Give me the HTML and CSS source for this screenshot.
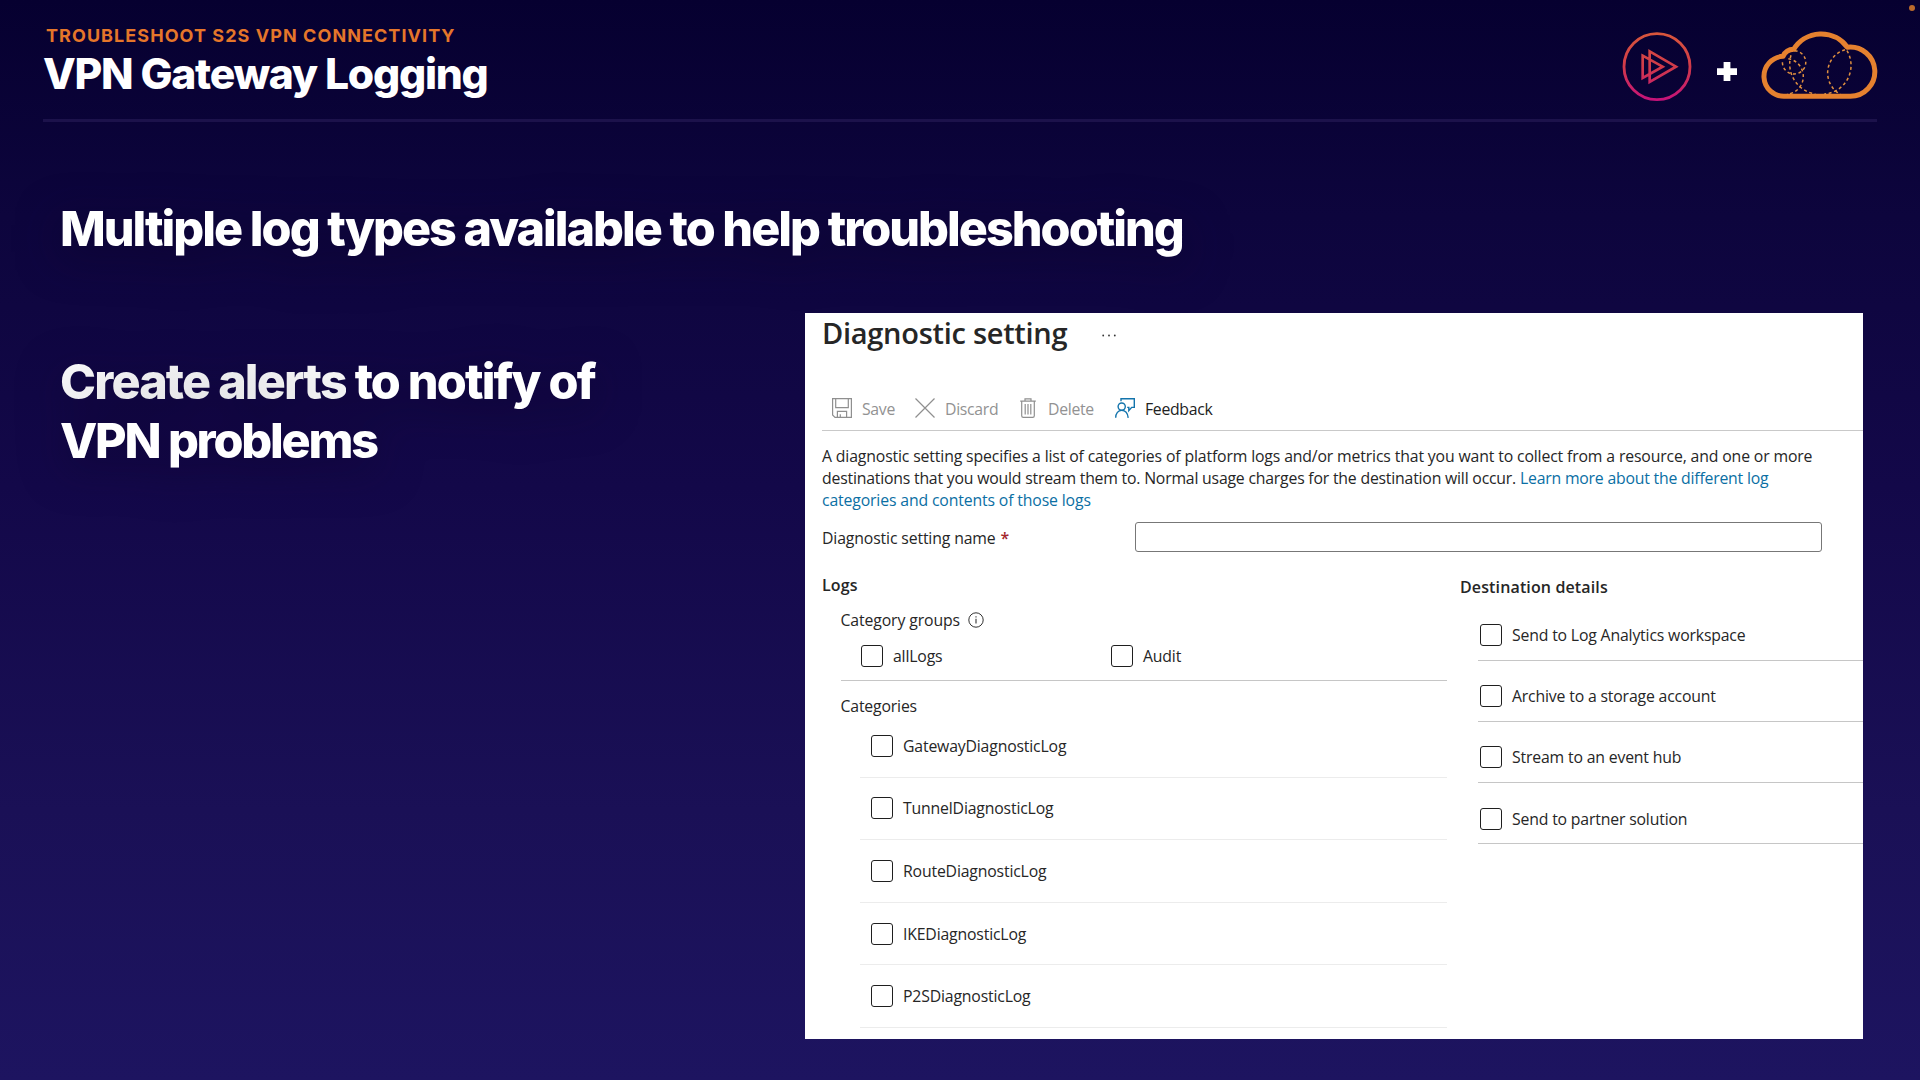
FILE: index.html
```html
<!DOCTYPE html>
<html lang="en">
<head>
<meta charset="utf-8">
<title>VPN Gateway Logging</title>
<link rel="stylesheet" href="styles.css">
</head>
<body>
<span class="rec-dot"></span>
<header class="header">
  <div class="titles">
    <p class="eyebrow">TROUBLESHOOT S2S VPN CONNECTIVITY</p>
    <h1 class="title">VPN Gateway Logging</h1>
  </div>
  <div class="logos">
    <svg class="play-logo" viewBox="68 96 210 210" fill="none">
      <defs>
        <linearGradient id="play" gradientUnits="userSpaceOnUse" x1="0" y1="96" x2="0" y2="304">
          <stop offset="0" stop-color="#d9573b"/><stop offset="0.5" stop-color="#d03a4a"/><stop offset="1" stop-color="#c5117b"/>
        </linearGradient>
      </defs>
      <g stroke="url(#play)">
        <circle cx="173" cy="200" r="99" stroke-width="8.500"/>
        <path stroke-width="8" d="M151 154 230 200 151 246ZM130 167 190 200 130 234Z"/>
      </g>
    </svg>
    <svg class="plus" viewBox="0 0 20 20" fill="#fff"><path d="M6.6 0h6.8v6.2H20v6.9h-6.6V19H6.6v-5.9H0V6.2h6.6z"/></svg>
    <svg class="cloud" viewBox="482 90 352 210" fill="none" stroke="#e5812f">
      <path stroke-width="15" stroke-linejoin="round" d="M554 289H750A74 74 0 1 0 741 141.500A97 97 0 0 0 580 148A36 36 0 0 0 548 169A60 60 0 0 0 554 289Z"/>
      <g stroke-width="4.500" stroke-dasharray="9 8" stroke="#e0903f">
        <path d="M583 152A35 35 0 1 1 547 180"/>
        <path d="M564 176A54 54 0 0 1 560 283"/>
        <path d="M572 166A91 91 0 0 0 645 282"/>
        <path d="M734 149A73 73 0 0 0 720 283"/>
        <path d="M740 152A86 86 0 0 1 672 282"/>
      </g>
    </svg>
  </div>
</header>
<main class="slide">
  <h2 class="point">Multiple log types available to help troubleshooting</h2>
  <div class="split">
    <h2 class="point alerts"><span class="shine">Create alerts</span> to notify of<br><span class="tail">VPN problems</span></h2>
    <section class="panel">
      <div class="panel-head">
        <h3 class="panel-title">Diagnostic setting</h3>
        <svg class="dots" viewBox="0 0 14 3" fill="#333"><circle cx="1.200" cy="1.500" r=".9"/><circle cx="7" cy="1.500" r=".9"/><circle cx="12.800" cy="1.500" r=".9"/></svg>
      </div>
      <div class="toolbar">
        <div class="tool save">
          <svg class="icon" viewBox="0 0 20 20" fill="none" stroke="#8f8f8f" stroke-width="1.200"><path d="M.6.6H19.400V19.400H3L.6 17ZM3.700.6V9.600H16.300V.6M5.400 19.400V13.300H14.600V19.400M8.300 19.400V16.200"/></svg>
          <span>Save</span>
        </div>
        <div class="tool discard">
          <svg class="icon" viewBox="0 0 20 20" fill="none" stroke="#8f8f8f" stroke-width="1.200"><path d="M.5.5 19.500 19.500M19.500.5.5 19.500"/></svg>
          <span>Discard</span>
        </div>
        <div class="tool delete">
          <svg class="icon" viewBox="0 0 20 20" fill="none" stroke="#8f8f8f" stroke-width="1.200"><path d="M2.200 3.200H17.800M7 3.200V.8H13V3.200M3.700 3.200V17.800Q3.700 19.400 5.300 19.400H14.700Q16.300 19.400 16.300 17.800V3.200M7.200 6V16.500M10 6V16.500M12.800 6V16.500"/></svg>
          <span>Delete</span>
        </div>
        <div class="tool feedback">
          <svg class="icon" viewBox="0 0 20 20" fill="none" stroke="#1374ac" stroke-width="1.400"><circle cx="6.700" cy="8.600" r="3.600"/><path d="M.7 19.800C.7 15.300 3.200 12.400 6.700 12.400S12.700 15.300 13.200 19.800M6 3.300V.7H19.300V9.400H16.700L13.800 12.600V9.400H12.200"/></svg>
          <span>Feedback</span>
        </div>
      </div>
      <p class="intro">A diagnostic setting specifies a list of categories of platform logs and/or metrics that you want to collect from a resource, and one or more<br><span class="tight">destinations that you would stream them to. Normal usage charges for the destination will occur. <a class="link">Learn more about the different log</a></span><br><a class="link">categories and contents of those logs</a></p>
      <div class="name-row">
        <label class="name-label" for="name">Diagnostic setting name <b class="req">*</b></label>
        <input class="name-input" id="name" type="text">
      </div>
      <div class="columns">
        <div class="logs">
          <h4 class="section">Logs</h4>
          <div class="group-label">Category groups
            <svg class="info" viewBox="0 0 16 16" fill="none" stroke="#333"><circle cx="8" cy="8" r="7.200" stroke-width="1"/><path d="M8 6.700V11.600M8 4.300V5.500" stroke-width="1.100"/></svg>
          </div>
          <div class="groups">
            <label class="check"><i class="box"></i>allLogs</label>
            <label class="check"><i class="box"></i>Audit</label>
          </div>
          <div class="cat-label">Categories</div>
          <div class="cats">
            <label class="check cat"><i class="box"></i>GatewayDiagnosticLog</label>
            <label class="check cat"><i class="box"></i>TunnelDiagnosticLog</label>
            <label class="check cat"><i class="box"></i>RouteDiagnosticLog</label>
            <label class="check cat"><i class="box"></i>IKEDiagnosticLog</label>
            <label class="check cat"><i class="box"></i>P2SDiagnosticLog</label>
          </div>
        </div>
        <div class="dest">
          <h4 class="section">Destination details</h4>
          <div class="dest-list">
            <label class="check dst"><i class="box"></i>Send to Log Analytics workspace</label>
            <label class="check dst"><i class="box"></i>Archive to a storage account</label>
            <label class="check dst"><i class="box"></i>Stream to an event hub</label>
            <label class="check dst"><i class="box"></i>Send to partner solution</label>
          </div>
        </div>
      </div>
    </section>
  </div>
</main>
</body>
</html>
```
FILE: styles.css
```css
* { box-sizing: border-box; margin: 0; padding: 0; }

body {
  width: 1920px;
  height: 1080px;
  overflow: hidden;
  background: linear-gradient(#060030 0, #0d053d 20%, #130849 45%, #1a1056 75%, #1d1460 100%);
  font-family: Inter, sans-serif;
  color: #fff;
}

.rec-dot {
  position: absolute;
  top: 5px;
  right: 5px;
  width: 6px;
  height: 6px;
  border-radius: 50%;
  background: #b96a2c;
}

.header {
  display: flex;
  justify-content: space-between;
  height: 122px;
  margin: 0 43px;
  padding-top: 23px;
  border-bottom: 3px solid #1c124b;
}

.eyebrow {
  padding-left: 3px;
  font-size: 18px;
  font-weight: 700;
  line-height: 25px;
  letter-spacing: 1.06px;
  color: #e5762a;
}

.title {
  font-size: 42.6px;
  font-weight: 800;
  line-height: 52px;
  letter-spacing: -1.25px;
}

.logos { display: flex; align-items: flex-start; }
.play-logo { width: 70px; height: 70px; margin-top: 9px; }
.plus { width: 20px; height: 20px; margin: 39px 24px 0 24.700px; }
.cloud { width: 117.300px; height: 70px; margin: 7px -1px 0 0; }

.slide { padding: 76.700px 57px 0 60px; }

.point {
  font-size: 48.5px;
  font-weight: 800;
  line-height: 59.3px;
  letter-spacing: -1.98px;
  white-space: nowrap;
  filter: drop-shadow(0 10px 22px rgba(12, 2, 38, .6));
}

.split { display: flex; justify-content: space-between; align-items: flex-start; }
.alerts { margin-top: 94px; letter-spacing: -1.84px; }
.tail { letter-spacing: -2.2px; }

.shine {
  color: transparent;
  background: radial-gradient(ellipse 180px 50px at 50% 80%, #e6e6e8 0, #ececee 55%, #fff 130%);
  -webkit-background-clip: text;
  background-clip: text;
}

.panel {
  width: 1058px;
  height: 726px;
  margin-top: 55px;
  padding-left: 17px;
  overflow: hidden;
  background: #fff;
  color: #262626;
  font: 15.8px/22px "Open Sans", sans-serif;
  letter-spacing: -.17px;
}

.panel-head { display: flex; align-items: flex-start; height: 40px; }
.panel-title {
  font-size: 29px;
  font-weight: 600;
  line-height: 40px;
  letter-spacing: -.28px;
}
.dots { width: 14px; height: 3px; margin: 21px 0 0 35px; }

.toolbar {
  display: flex;
  align-items: flex-end;
  height: 78px;
  padding: 0 0 10px 10px;
  border-bottom: 1px solid #c9c9c9;
}
.tool { display: flex; align-items: center; gap: 10px; height: 24px; color: #929292; letter-spacing: -.3px; }
.tool span { padding-top: 2px; }
.save { width: 83px; }
.discard { width: 103px; }
.delete { width: 97px; }
.feedback { gap: 10px; color: #222; }
.icon { width: 20px; height: 20px; }

.intro { margin-top: 14.500px; white-space: nowrap; letter-spacing: -.145px; }
.tight { letter-spacing: -.203px; }

.link { color: #0b6fa4; }

.name-row { display: flex; height: 30px; margin-top: 10.500px; }
.name-label { width: 313px; padding-top: 5.500px; letter-spacing: -.14px; }
.req { margin-left: 1px; font-weight: 600; color: #a4262c; }
.name-input { width: 687px; height: 30px; border: 1px solid #777; border-radius: 3px; background: #fff; }

.columns { display: grid; grid-template-columns: 625px 1fr; column-gap: 13px; }
.logs { padding-top: 22px; }
.section { font-size: 16px; font-weight: 600; letter-spacing: .13px; }

.group-label { display: flex; align-items: center; gap: 8.500px; margin: 13px 0 0 18.500px; height: 22px; letter-spacing: -.12px; }
.info { width: 16px; height: 16px; }

.groups {
  display: grid;
  grid-template-columns: 250px 1fr;
  margin: 14px 0 0 19px;
  padding: 0 0 13px 20px;
  border-bottom: 1px solid #c6c6c6;
}
.check { display: flex; align-items: center; gap: 10px; }
.box { width: 22px; height: 22px; border: 1px solid #1f1f1f; border-radius: 3px; }

.cat-label { margin: 16px 0 0 18.500px; line-height: 19px; }
.cats { margin: -1px 0 0 38px; }
.cat { height: 62.6px; padding-left: 11px; border-bottom: 1px solid #ececec; }

.dest { padding-top: 24px; }
.dest-list { margin: 1.500px 0 0 18px; }
.dst { height: 61.1px; padding: 11.500px 0 0 2px; border-bottom: 1px solid #c6c6c6; }
```
